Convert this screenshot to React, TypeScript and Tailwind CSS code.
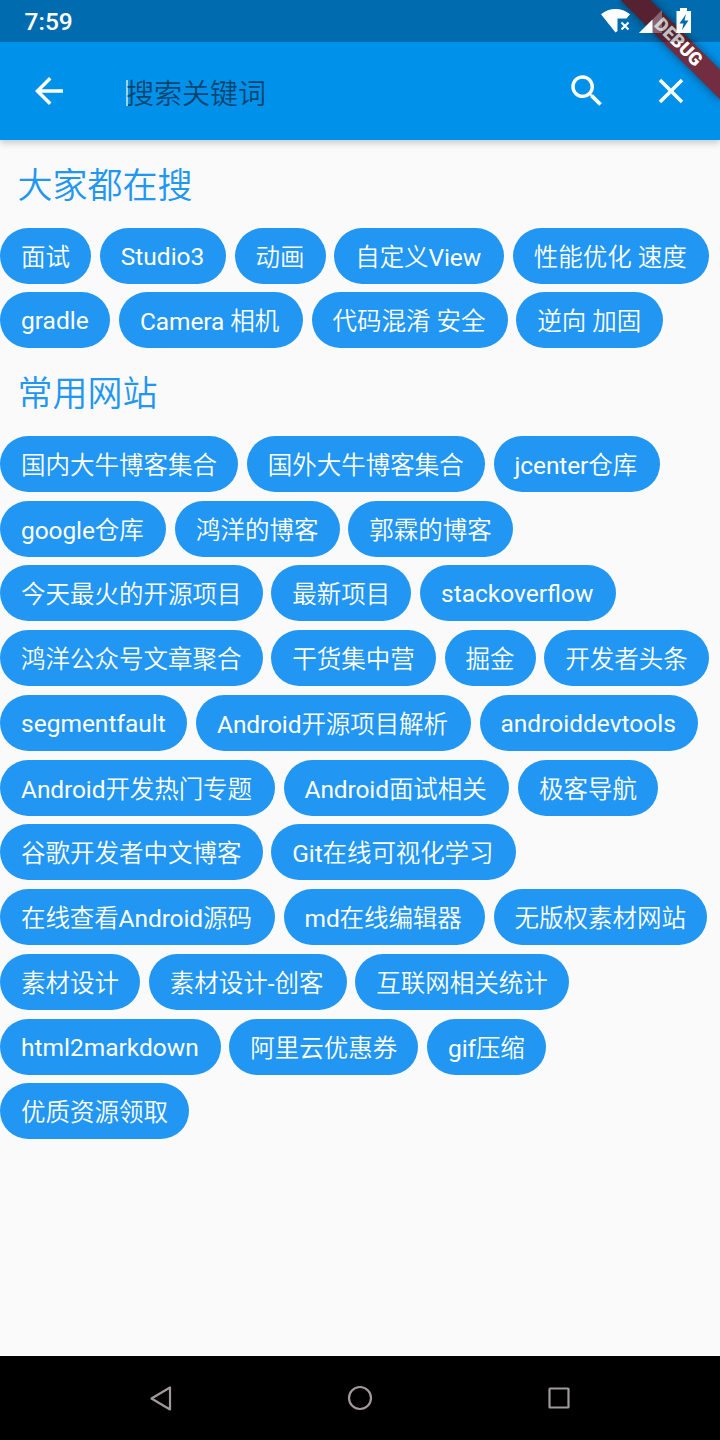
import React from "react";
import clsx from "clsx";

type Chip = [label: string, textWidth: number];

// Text widths are in density-independent units; one unit is 1.75px.
const UNIT = 1.75;

const hotWords: Chip[] = [
  ["面试", 28],
  ["Studio3", 48],
  ["动画", 28],
  ["自定义View", 73],
  ["性能优化 速度", 88],
  ["gradle", 39],
  ["Camera 相机", 81],
  ["代码混淆 安全", 88],
  ["逆向 加固", 60],
];

const sites: Chip[] = [
  ["国内大牛博客集合", 112],
  ["国外大牛博客集合", 112],
  ["jcenter仓库", 71],
  ["google仓库", 71],
  ["鸿洋的博客", 70],
  ["郭霖的博客", 70],
  ["今天最火的开源项目", 126],
  ["最新项目", 56],
  ["stackoverflow", 88],
  ["鸿洋公众号文章聚合", 126],
  ["干货集中营", 70],
  ["掘金", 28],
  ["开发者头条", 70],
  ["segmentfault", 83],
  ["Android开源项目解析", 133],
  ["androiddevtools", 101],
  ["Android开发热门专题", 133],
  ["Android面试相关", 105],
  ["极客导航", 56],
  ["谷歌开发者中文博客", 126],
  ["Git在线可视化学习", 116],
  ["在线查看Android源码", 133],
  ["md在线编辑器", 91],
  ["无版权素材网站", 98],
  ["素材设计", 56],
  ["素材设计-创客", 89],
  ["互联网相关统计", 98],
  ["html2markdown", 102],
  ["阿里云优惠券", 84],
  ["gif压缩", 44],
  ["优质资源领取", 84],
];

function Icon({ d }: { d: string }) {
  return (
    <svg viewBox="0 0 24 24" className="size-[42px] fill-white">
      <path d={d} />
    </svg>
  );
}

function Section({ title, items }: { title: string; items: Chip[] }) {
  return (
    <section>
      <h2 className="h-[87.5px] px-[17.5px] pt-[3px] text-[35px] leading-[87.5px] font-[350] text-[#2196f3]">{title}</h2>
      <div className="flex flex-wrap gap-[8.75px]">
        {items.map(([label, textWidth]) => {
          const hasHan = /[\u4e00-\u9fff]/.test(label);
          const hasLatin = /[A-Za-z]/.test(label);
          return (
            <button
              key={label}
              style={{ width: (textWidth + 24) * UNIT }}
              className={clsx(
                "h-14 rounded-full bg-[#2196f3] pl-[21px] text-left text-[24.5px] font-normal whitespace-nowrap text-white",
                hasHan ? "leading-[59px]" : "leading-[57px]",
                hasHan && hasLatin && "tracking-[-0.1px]",
              )}
            >
              {label}
            </button>
          );
        })}
      </div>
    </section>
  );
}

function StatusBar() {
  return (
    <div className="relative flex h-[42px] items-center justify-between bg-black/25 pl-[24.5px] text-white">
      <span className="pt-[2px] text-[24.5px] leading-none font-medium">7:59</span>
      <svg viewBox="0 0 120 42" className="h-[42px] w-[120px] fill-white">
        <path d="M1 14.200C9.500 7.300 21.500 7.300 30 14.200L26.500 18.500H17.500V31L15.500 32.500Z" />
        <path d="M21.500 22.500L28.500 29.500M28.500 22.500L21.500 29.500" className="stroke-white stroke-2" />
        <path d="M62 10V33H39Z" className="fill-white/30" />
        <path d="M52.500 19.500V33H39Z" />
        <path fillRule="evenodd" d="M80 8h7v3h4v22H76.500V11H80ZM86 14L79.500 23.500H83.500L82 30L88.500 20.500H84.500Z" />
      </svg>
    </div>
  );
}

export default function App() {
  return (
    <div
      lang="zh-CN"
      className="flex h-[1440px] w-[720px] flex-col overflow-hidden bg-[#fafafa] font-['Roboto','Noto_Sans_CJK_SC_DemiLight','Noto_Sans_CJK_SC',sans-serif]"
    >
      <header className="relative shrink-0 bg-[#0091ea] shadow-[0_3px_7px_rgba(0,0,0,0.2)]">
        <div className="absolute inset-0 overflow-hidden">
          <div className="absolute top-[31.5px] left-[608px] h-[21px] w-[140px] rotate-45 bg-[#732d40] text-center text-[18.5px] leading-[21px] font-black text-white shadow-[0_0_10px_rgba(0,0,0,0.5)]">
            DEBUG
          </div>
        </div>
        <StatusBar />
        <div className="flex h-[98px] items-center pr-[7px]">
          <button aria-label="返回" className="flex w-[98px] justify-center">
            <Icon d="M20 11H7.830l5.590-5.590L12 4l-8 8 8 8 1.410-1.410L7.830 13H20v-2z" />
          </button>
          <div className="ml-7 flex flex-1 items-center pt-[3px]">
            <span className="h-[26px] w-[1.500px] bg-white/60" />
            <span className="-ml-[1.500px] pt-[5px] text-[28px] leading-[40px] font-[350] text-black/55">搜索关键词</span>
          </div>
          <button aria-label="搜索" className="flex w-[84px] justify-center">
            <Icon d="M15.500 14h-.79l-.28-.27C15.410 12.590 16 11.110 16 9.500 16 5.910 13.090 3 9.500 3S3 5.910 3 9.500 5.910 16 9.500 16c1.610 0 3.090-.59 4.230-1.570l.27.28v.79l5 4.990L20.490 19l-4.990-5zm-6 0C7.010 14 5 11.990 5 9.500S7.010 5 9.500 5 14 7.010 14 9.500 11.990 14 9.500 14z" />
          </button>
          <button aria-label="清除" className="flex w-[84px] justify-center">
            <Icon d="M19 6.410L17.590 5 12 10.590 6.410 5 5 6.410 10.590 12 5 17.590 6.410 19 12 13.410 17.590 19 19 17.590 13.410 12z" />
          </button>
        </div>
      </header>
      <main className="flex-1">
        <Section title="大家都在搜" items={hotWords} />
        <Section title="常用网站" items={sites} />
      </main>
      <nav className="flex h-[84px] shrink-0 items-center justify-center bg-black">
        <svg viewBox="0 0 720 84" className="h-[84px] w-[720px] fill-none stroke-[#a09a9c] stroke-[2.2px]">
          <path d="M170 31.500V53.500L151.500 42.500Z" strokeLinejoin="round" />
          <circle cx="360" cy="42" r="11" />
          <rect x="549.500" y="32.500" width="19" height="19" rx="0.500" />
        </svg>
      </nav>
    </div>
  );
}
